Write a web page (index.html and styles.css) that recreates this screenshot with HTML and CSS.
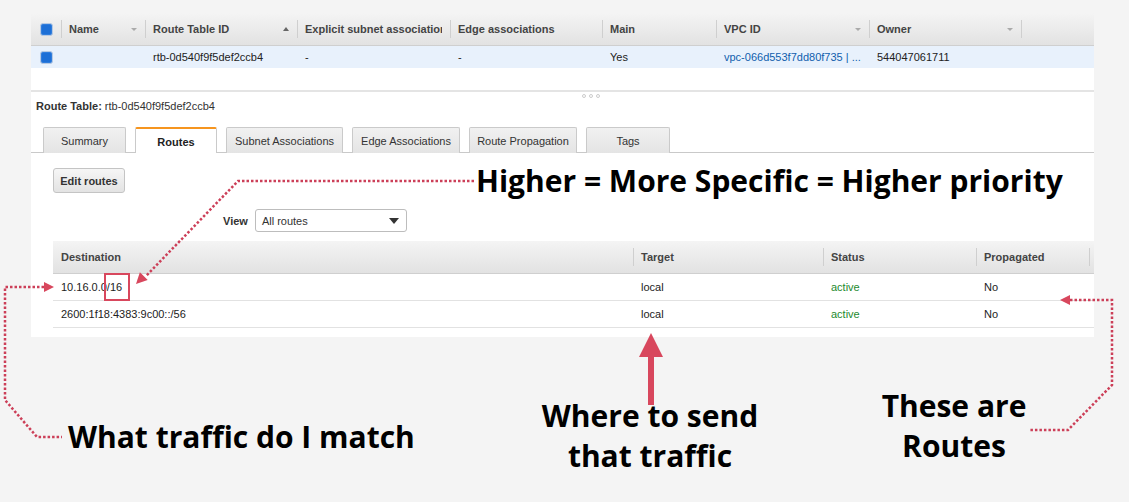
FILE: index.html
```html
<!DOCTYPE html>
<html lang="en">
<head>
  <meta charset="UTF-8" />
  <title>Route Table - Routes</title>
  <link rel="stylesheet" href="styles.css">
</head>
<body>
  <div class="page">
    <div class="panel">
      <table class="grid top-grid">
        <colgroup>
          <col style="width:30px"><col style="width:84px"><col style="width:152px"><col style="width:153px"><col style="width:152px"><col style="width:114px"><col style="width:153px"><col style="width:152px"><col style="width:73px">
        </colgroup>
        <thead>
          <tr>
            <th class="chk"><span class="cb"></span></th>
            <th><div class="th-in"><span>Name</span><span class="caret down"></span></div></th>
            <th><div class="th-in"><span>Route Table ID</span><span class="caret up"></span></div></th>
            <th><div class="th-in"><span class="clip">Explicit subnet association</span></div></th>
            <th><div class="th-in"><span>Edge associations</span></div></th>
            <th><div class="th-in"><span>Main</span></div></th>
            <th><div class="th-in"><span>VPC ID</span><span class="caret down"></span></div></th>
            <th><div class="th-in"><span>Owner</span><span class="caret down"></span></div></th>
            <th></th>
          </tr>
        </thead>
        <tbody>
          <tr class="selected">
            <td class="chk"><span class="cb"></span></td>
            <td></td>
            <td>rtb-0d540f9f5def2ccb4</td>
            <td>-</td>
            <td>-</td>
            <td>Yes</td>
            <td><a class="link">vpc-066d553f7dd80f735 | ...</a></td>
            <td>544047061711</td>
            <td></td>
          </tr>
        </tbody>
      </table>

      <div class="spacer"></div>
      <div class="splitter"><span class="dot"></span><span class="dot"></span><span class="dot"></span></div>

      <div class="rt-title"><b>Route Table:</b> rtb-0d540f9f5def2ccb4</div>

      <div class="tabs">
        <div class="tab t-summary">Summary</div>
        <div class="tab t-routes active">Routes</div>
        <div class="tab t-subnet">Subnet Associations</div>
        <div class="tab t-edge">Edge Associations</div>
        <div class="tab t-prop">Route Propagation</div>
        <div class="tab t-tags">Tags</div>
      </div>

      <div class="tab-body">
        <button class="btn">Edit routes</button>

        <div class="view-row">
          <label>View</label>
          <div class="select">
            <span>All routes</span>
            <svg width="10" height="6" viewBox="0 0 10 6"><path d="M0 0 H10 L5 6 Z" fill="#333"/></svg>
          </div>
        </div>

        <table class="grid routes">
          <colgroup>
            <col style="width:580px"><col style="width:190px"><col style="width:153px"><col style="width:113px"><col style="width:5px">
          </colgroup>
          <thead>
            <tr>
              <th class="first">Destination</th>
              <th>Target</th>
              <th>Status</th>
              <th>Propagated</th>
              <th></th>
            </tr>
          </thead>
          <tbody>
            <tr>
              <td>10.16.0.0/16</td>
              <td>local</td>
              <td class="ok">active</td>
              <td>No</td>
              <td></td>
            </tr>
            <tr>
              <td>2600:1f18:4383:9c00::/56</td>
              <td>local</td>
              <td class="ok">active</td>
              <td>No</td>
              <td></td>
            </tr>
          </tbody>
        </table>
      </div>
    </div>

    <svg class="overlay" width="1129" height="502" viewBox="0 0 1129 502">
      <g fill="none" stroke="#cc3f58" stroke-width="2.5" stroke-dasharray="2.5 2">
        <path d="M474 181 H238 L146 276"/>
        <path d="M44 287 H5 V400 L37 437 H62"/>
        <path d="M1070 300 H1112 V385 L1068 430 H1030"/>
      </g>
      <g fill="#d8475d">
        <polygon points="136,284 147.7,280.1 139.9,272.3"/>
        <polygon points="54,287 44,282 44,292"/>
        <polygon points="1060,300 1070,295 1070,305"/>
        <polygon points="651,333 663,357 639,357"/>
        <rect x="648" y="355" width="6" height="50"/>
      </g>
      <rect x="105" y="274" width="24" height="26" fill="none" stroke="#d8475d" stroke-width="2"/>
    </svg>

    <div class="note note-higher">Higher = More Specific = Higher priority</div>
    <div class="note note-match">What traffic do I match</div>
    <div class="note note-where">Where to send<br>that traffic</div>
    <div class="note note-routes">These are<br>Routes</div>
  </div>
</body>
</html>
```

FILE: styles.css
```css
* {
  box-sizing: border-box;
}
body {
  margin: 0;
  background-color: #f4f4f4;
  font-family: "Liberation Sans", Arial, sans-serif;
  font-size: 11px;
  color: #222;
}
.page {
  position: relative;
  width: 1129px;
  height: 502px;
  padding-top: 13px;
  padding-left: 31px;
}
.panel {
  width: 1063px;
  background: #fff;
  padding-bottom: 9px;
}

/* grids */
.grid {
  border-collapse: separate;
  border-spacing: 0;
  table-layout: fixed;
  width: 100%;
}
.grid th {
  height: 33px;
  padding: 0 8px;
  text-align: left;
  font-weight: bold;
  color: #444;
  border-bottom: 1px solid #cfcfcf;
  background-image: linear-gradient(#cfcfcf, #cfcfcf), linear-gradient(#f4f4f4, #e2e2e2);
  background-size: 1px 18px, 100% 100%;
  background-position: left center, 0 0;
  background-repeat: no-repeat;
  white-space: nowrap;
  overflow: hidden;
}
.grid th.chk,
.grid th.first {
  background-image: linear-gradient(#f4f4f4, #e2e2e2);
  background-size: 100% 100%;
}
.th-in {
  display: flex;
  align-items: center;
  justify-content: space-between;
}
.clip {
  overflow: hidden;
  white-space: nowrap;
}
.caret {
  width: 0;
  height: 0;
  border-left: 3px solid transparent;
  border-right: 3px solid transparent;
}
.caret.down {
  border-top: 3px solid #aaa;
}
.caret.up {
  border-bottom: 4px solid #666;
}
.top-grid td {
  height: 22px;
  padding: 0 8px;
  white-space: nowrap;
  overflow: hidden;
}
.top-grid .chk {
  padding: 0 0 0 9px;
}
.selected td {
  background: #e8f1fc;
}
.cb {
  display: block;
  width: 13px;
  height: 13px;
  border-radius: 3px;
  background: #1d6fd6;
  border: 1px solid #b7c9e2;
  box-shadow: inset 0 0 0 1px #2f7ddd;
}
.link {
  color: #105ead;
}

/* splitter */
.spacer {
  height: 22px;
}
.splitter {
  height: 10px;
  border-top: 2px solid #e4e4e4;
  display: flex;
  justify-content: center;
  gap: 3px;
  padding-top: 2px;
  padding-left: 56px;
}
.dot {
  width: 4px;
  height: 4px;
  border-radius: 50%;
  border: 1px solid #ccc;
}

.rt-title {
  padding-left: 5px;
  line-height: 13px;
  color: #333;
}

/* tabs */
.tabs {
  display: flex;
  gap: 9px;
  margin-top: 14px;
  padding-left: 12px;
  border-bottom: 1px solid #c9c9c9;
  height: 26px;
}
.tab {
  height: 26px;
  margin-bottom: -1px;
  border: 1px solid #cacaca;
  border-bottom: none;
  border-radius: 2px 2px 0 0;
  background: linear-gradient(#f1f1f1, #e4e4e4);
  color: #333;
  display: flex;
  align-items: center;
  justify-content: center;
}
.tab.active {
  background: #fff;
  border-top: 2px solid #f6951f;
  font-weight: bold;
  color: #222;
  padding-top: 2px;
}
.t-summary { width: 83px; }
.t-routes { width: 82px; }
.t-subnet { width: 117px; }
.t-edge { width: 108px; }
.t-prop { width: 108px; }
.t-tags { width: 84px; }

.tab-body {
  padding-left: 22px;
  padding-top: 15px;
}
.btn {
  display: block;
  width: 72px;
  height: 25px;
  border: 1px solid #c4c4c4;
  border-radius: 3px;
  background: linear-gradient(#f6f6f6, #e3e3e3);
  font-family: "Liberation Sans", Arial, sans-serif;
  font-size: 11px;
  font-weight: bold;
  color: #333;
  padding: 0;
}
.view-row {
  display: flex;
  align-items: center;
  gap: 7px;
  margin-top: 16px;
  margin-left: 170px;
}
.view-row label {
  font-weight: bold;
  color: #333;
}
.select {
  width: 152px;
  height: 23px;
  border: 1px solid #bdbdbd;
  border-radius: 3px;
  display: flex;
  align-items: center;
  justify-content: space-between;
  padding: 0 7px 0 6px;
  color: #333;
}

.routes {
  margin-top: 9px;
}
.routes td {
  height: 27px;
  padding: 0 8px;
  border-bottom: 1px solid #e2e2e2;
  white-space: nowrap;
}
.routes .ok {
  color: #1e8a2e;
}

/* annotations */
.overlay {
  position: absolute;
  left: 0;
  top: 0;
  pointer-events: none;
}
.note {
  position: absolute;
  font-family: "Open Sans", "Noto Sans", sans-serif;
  font-weight: 700;
  color: #000;
  white-space: nowrap;
}
.note-higher {
  left: 476px;
  top: 160px;
  font-size: 30px;
  line-height: 41px;
}
.note-match {
  left: 68px;
  top: 416px;
  font-size: 30px;
  line-height: 41px;
}
.note-where {
  left: 520px;
  width: 260px;
  top: 396px;
  font-size: 30px;
  line-height: 40px;
  text-align: center;
}
.note-routes {
  left: 834px;
  width: 240px;
  top: 386px;
  font-size: 30px;
  line-height: 40px;
  text-align: center;
}
```
